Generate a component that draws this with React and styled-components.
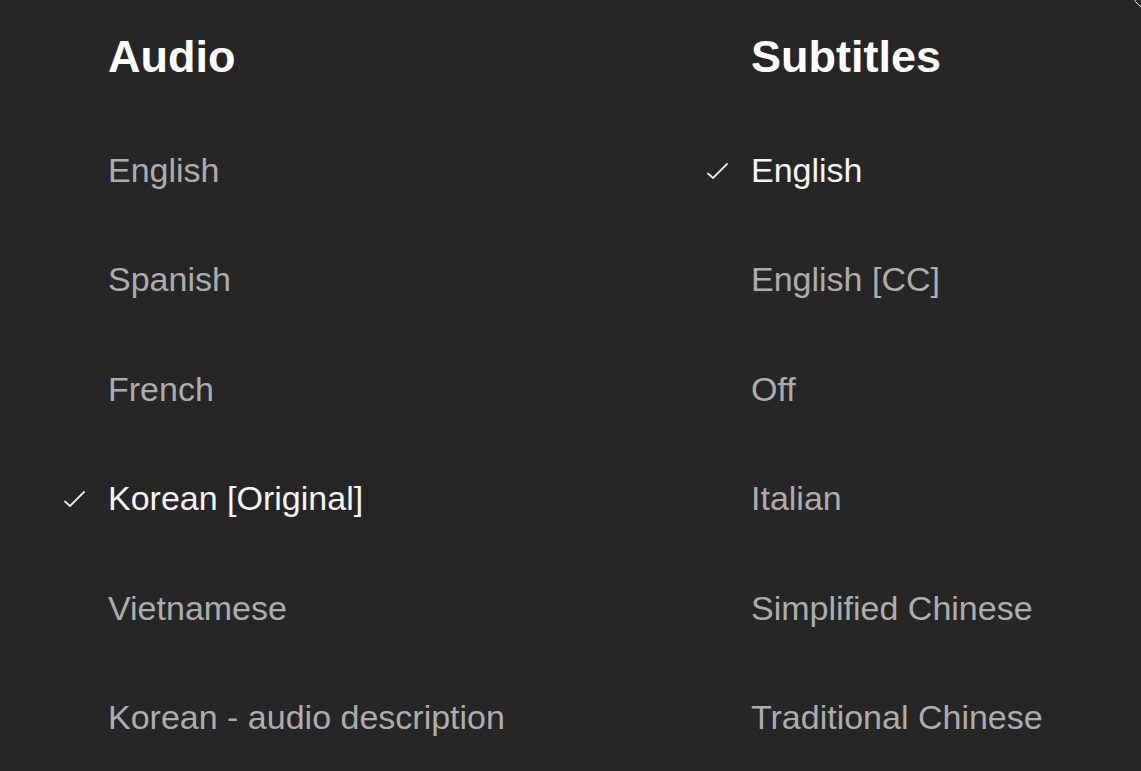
import React from 'react';
import styled, { createGlobalStyle } from 'styled-components';

const GlobalStyle = createGlobalStyle`
  html, body {
    margin: 0;
    padding: 0;
    background: #262626;
  }
  body {
    font-family: "Liberation Sans", Arial, Helvetica, sans-serif;
    -webkit-font-smoothing: antialiased;
  }
`;

const Screen = styled.div`
  position: relative;
  width: 100%;
  height: 771px;
  overflow: hidden;
  background: #262626;
  box-sizing: border-box;
  padding-left: 63px;
  display: grid;
  grid-template-columns: 643px 1fr;
`;

const Column = styled.section`
  display: flex;
  flex-direction: column;
`;

const Heading = styled.h2`
  margin: 0 0 2px 45px;
  font-size: 45px;
  line-height: 114px;
  font-weight: 700;
  color: #ffffff;
`;

const List = styled.ul`
  list-style: none;
  margin: 0;
  padding: 0;
`;

const Row = styled.li`
  display: flex;
  align-items: center;
  height: 109.4px;
`;

const CheckSlot = styled.span`
  width: 45px;
  height: 18px;
  display: flex;
  align-items: center;
`;

const Label = styled.span`
  font-size: 34px;
  line-height: 109.4px;
  color: ${(p) => (p.$selected ? '#f4f4f4' : '#adadad')};
  white-space: nowrap;
`;

const CornerRing = styled.div`
  position: absolute;
  top: -33px;
  right: -34px;
  width: 44px;
  height: 44px;
  border-radius: 50%;
  border: 1.5px solid #e8e8e8;
  box-sizing: border-box;
`;

const Check = () => (
  <svg width="22" height="18" viewBox="0 0 22 18" fill="none">
    <path d="M2 11.5 L7 16 L21 2" stroke="#e6e6e6" strokeWidth="1.8" strokeLinecap="round" strokeLinejoin="round" />
  </svg>
);

const audio = [
  { name: 'English' },
  { name: 'Spanish' },
  { name: 'French' },
  { name: 'Korean [Original]', selected: true },
  { name: 'Vietnamese' },
  { name: 'Korean - audio description' },
];

const subtitles = [
  { name: 'English', selected: true },
  { name: 'English [CC]' },
  { name: 'Off' },
  { name: 'Italian' },
  { name: 'Simplified Chinese' },
  { name: 'Traditional Chinese' },
];

const OptionList = ({ title, items }) => (
  <Column>
    <Heading>{title}</Heading>
    <List>
      {items.map((item) => (
        <Row key={item.name}>
          <CheckSlot>{item.selected && <Check />}</CheckSlot>
          <Label $selected={item.selected}>{item.name}</Label>
        </Row>
      ))}
    </List>
  </Column>
);

const App = () => (
  <>
    <GlobalStyle />
    <Screen>
      <OptionList title="Audio" items={audio} />
      <OptionList title="Subtitles" items={subtitles} />
      <CornerRing />
    </Screen>
  </>
);

export default App;
